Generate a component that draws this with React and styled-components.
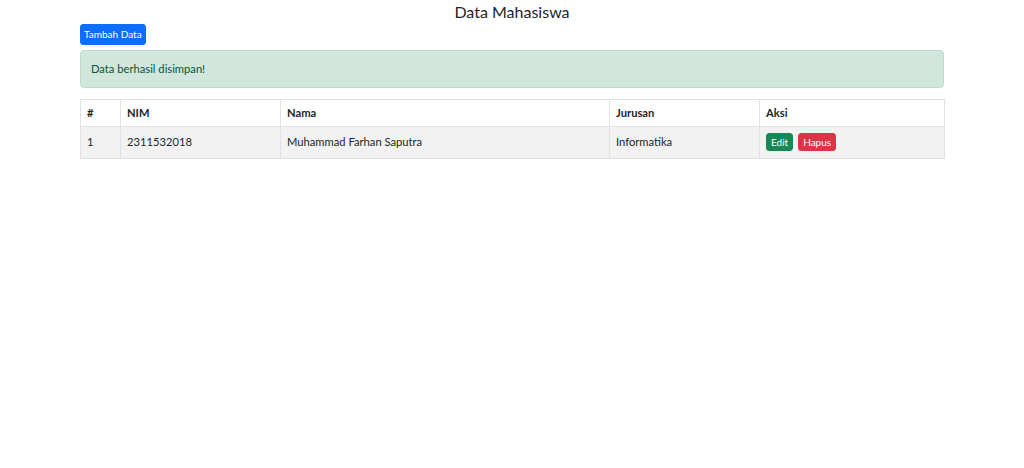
import React from 'react';
import styled, { createGlobalStyle } from 'styled-components';

const GlobalStyle = createGlobalStyle`
  *, *::before, *::after {
    box-sizing: border-box;
  }
  body {
    margin: 0;
    background: #fff;
    color: #212529;
    font-family: Lato, "Open Sans", sans-serif;
    font-size: 11.2px;
  }
`;

const Container = styled.div`
  width: 864px;
  margin: 0 auto;
  padding-top: 1px;
`;

const Title = styled.h2`
  margin: 1px 0 3px;
  text-align: center;
  font-weight: 400;
  font-size: 16px;
  line-height: 19px;
`;

const Button = styled.button`
  display: inline-block;
  border: 1px solid ${(p) => p.$bg};
  border-radius: 3px;
  background: ${(p) => p.$bg};
  color: #fff;
  font-family: inherit;
  font-size: 10px;
  line-height: ${(p) => (p.$small ? '16px' : '19px')};
  padding: ${(p) => (p.$small ? '0 4px' : '0 3px')};
  cursor: pointer;
`;

const Alert = styled.div`
  margin: 5px 0 11px;
  padding: 9px 10px;
  border: 1px solid #badbcc;
  border-radius: 4px;
  background: #d1e7dd;
  color: #0f5132;
  line-height: 18px;
`;

const Table = styled.table`
  width: 100%;
  table-layout: fixed;
  border-collapse: collapse;
  border: 1px solid #dee2e6;
`;

const Th = styled.th`
  width: ${(p) => p.$w}px;
  text-align: left;
  font-weight: 700;
  padding: 4px 6px;
  line-height: 18px;
  border: 1px solid #dee2e6;
`;

const Td = styled.td`
  padding: 6px 6px 7px;
  line-height: 18px;
  vertical-align: top;
  border: 1px solid #dee2e6;
  background: #f2f2f2;
`;

const Actions = styled.div`
  display: flex;
  gap: 5px;
`;

const columns = [
  { label: '#', w: 40 },
  { label: 'NIM', w: 160 },
  { label: 'Nama', w: 329 },
  { label: 'Jurusan', w: 150 },
  { label: 'Aksi', w: 185 },
];

const rows = [
  { id: 1, nim: '2311532018', nama: 'Muhammad Farhan Saputra', jurusan: 'Informatika' },
];

const App = () => {
  return (
    <>
      <GlobalStyle />
      <Container>
        <Title>Data Mahasiswa</Title>
        <Button $bg="#0d6efd">Tambah Data</Button>
        <Alert>Data berhasil disimpan!</Alert>
        <Table>
          <thead>
            <tr>
              {columns.map((c) => (
                <Th key={c.label} $w={c.w}>{c.label}</Th>
              ))}
            </tr>
          </thead>
          <tbody>
            {rows.map((r) => (
              <tr key={r.id}>
                <Td>{r.id}</Td>
                <Td>{r.nim}</Td>
                <Td>{r.nama}</Td>
                <Td>{r.jurusan}</Td>
                <Td>
                  <Actions>
                    <Button $small $bg="#198754">Edit</Button>
                    <Button $small $bg="#dc3545">Hapus</Button>
                  </Actions>
                </Td>
              </tr>
            ))}
          </tbody>
        </Table>
      </Container>
    </>
  );
};

export default App;
